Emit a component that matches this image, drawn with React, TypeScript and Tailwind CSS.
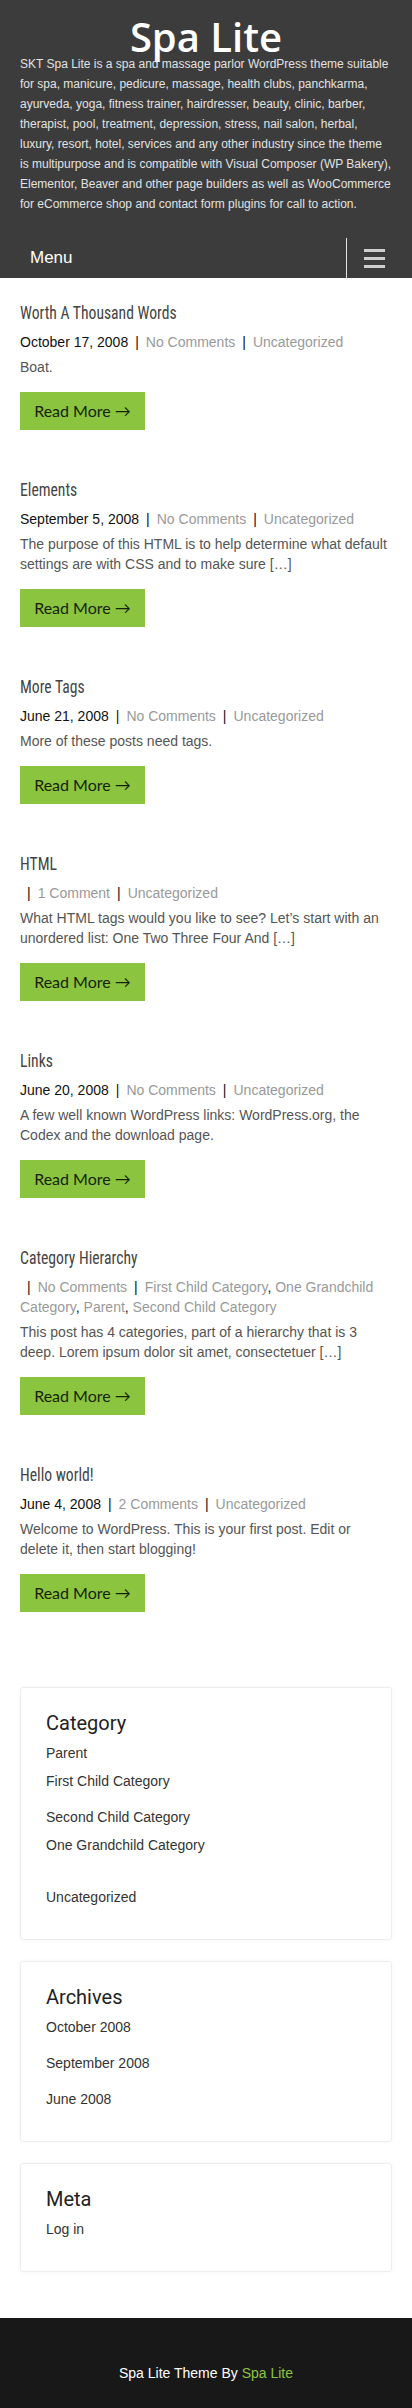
import type { ReactNode } from 'react';

type Post = {
  title: string;
  date?: string;
  comments: string;
  cats: string[];
  excerpt: string;
};

const posts: Post[] = [
  { title: 'Worth A Thousand Words', date: 'October 17, 2008', comments: 'No Comments', cats: ['Uncategorized'], excerpt: 'Boat.' },
  {
    title: 'Elements',
    date: 'September 5, 2008',
    comments: 'No Comments',
    cats: ['Uncategorized'],
    excerpt: 'The purpose of this HTML is to help determine what default settings are with CSS and to make sure […]',
  },
  { title: 'More Tags', date: 'June 21, 2008', comments: 'No Comments', cats: ['Uncategorized'], excerpt: 'More of these posts need tags.' },
  {
    title: 'HTML',
    comments: '1 Comment',
    cats: ['Uncategorized'],
    excerpt: 'What HTML tags would you like to see? Let’s start with an unordered list: One Two Three Four And […]',
  },
  {
    title: 'Links',
    date: 'June 20, 2008',
    comments: 'No Comments',
    cats: ['Uncategorized'],
    excerpt: 'A few well known WordPress links: WordPress.org, the Codex and the download page.',
  },
  {
    title: 'Category Hierarchy',
    comments: 'No Comments',
    cats: ['First Child Category', 'One Grandchild Category', 'Parent', 'Second Child Category'],
    excerpt: 'This post has 4 categories, part of a hierarchy that is 3 deep. Lorem ipsum dolor sit amet, consectetuer […]',
  },
  {
    title: 'Hello world!',
    date: 'June 4, 2008',
    comments: '2 Comments',
    cats: ['Uncategorized'],
    excerpt: 'Welcome to WordPress. This is your first post. Edit or delete it, then start blogging!',
  },
];

const arial = "font-['Liberation_Sans',Arial,sans-serif]";

function PostItem({ post }: { post: Post }) {
  return (
    <article className="mb-[47px]">
      <h2 className="h-[24px] text-[18px] leading-[24px] text-[#444]">
        {/* no condensed face installed, so squeeze Roboto to the narrow width */}
        <span className="inline-block origin-left scale-x-[0.87] whitespace-nowrap font-['Roboto_Condensed',Roboto,sans-serif]">
          {post.title}
        </span>
      </h2>
      <div className={`${arial} mt-[8px] text-[14px] leading-[20px] text-[#111]`}>
        {post.date}
        <span className="mx-[7px]">|</span>
        <a className="text-[#999]">{post.comments}</a>
        <span className="mx-[7px]">|</span>
        {post.cats.map((c, i) => (
          <span key={c}>
            <a className="text-[#999]">{c}</a>
            {i < post.cats.length - 1 ? ', ' : ''}
          </span>
        ))}
      </div>
      <p className={`${arial} mt-[5px] text-[14px] leading-[20px] text-[#555]`}>{post.excerpt}</p>
      <a className="mt-[15px] flex h-[38px] w-[125px] items-center justify-center bg-[#8bc53f] font-['Lato',sans-serif] text-[16px] text-[#17220c]">
        Read More →
      </a>
    </article>
  );
}

function Widget({ title, children }: { title: string; children: ReactNode }) {
  return (
    <section className="rounded-[3px] border border-[#eee] px-[25px] pt-[21px] pb-[32px] shadow-[0_0_4px_rgba(0,0,0,0.04)]">
      <h3 className="font-['Roboto',sans-serif] text-[20px] leading-[28px] text-[#222]">{title}</h3>
      <ul className={`${arial} mt-[6px] text-[14px] leading-[20px] text-[#333]`}>{children}</ul>
    </section>
  );
}

export default function App() {
  return (
    <div className="w-[412px] bg-white">
      <header className="bg-[#3c3c3c]">
        <h1 className="pt-[19px] text-center font-['Open_Sans',sans-serif] text-[40px] font-semibold leading-[36px] text-white">
          Spa Lite
        </h1>
        <p className={`${arial} -mt-px px-[20px] text-[12px] leading-[20px] text-[#e2e2e2]`}>
          SKT Spa Lite is a spa and massage parlor WordPress theme suitable for spa, manicure, pedicure, massage, health
          clubs, panchkarma, ayurveda, yoga, fitness trainer, hairdresser, beauty, clinic, barber, therapist, pool,
          treatment, depression, stress, nail salon, herbal, luxury, resort, hotel, services and any other industry since
          the theme is multipurpose and is compatible with Visual Composer (WP Bakery), Elementor, Beaver and other page
          builders as well as WooCommerce for eCommerce shop and contact form plugins for call to action.
        </p>
        <nav className="mt-[24px] flex h-[40px] items-center">
          <span className={`${arial} flex-1 pl-[30px] text-[17px] text-white`}>Menu</span>
          <div className="h-full w-px bg-[#e5e5e5]" />
          <button className="flex h-full w-[65px] flex-col items-center justify-center gap-[5px] pr-[10px]">
            <span className="block h-[3px] w-[21px] bg-[#cfcfcf]" />
            <span className="block h-[3px] w-[21px] bg-[#cfcfcf]" />
            <span className="block h-[3px] w-[21px] bg-[#cfcfcf]" />
          </button>
        </nav>
      </header>

      <main className="px-[20px] pt-[22px]">
        {posts.map((p) => (
          <PostItem key={p.title} post={p} />
        ))}
        {/* collapses with the last post's bottom margin */}
        <div className="mt-[75px] flex flex-col gap-[21px]">
          <Widget title="Category">
            <li>Parent</li>
            <li className="mt-[8px]">First Child Category</li>
            <li className="mt-[16px]">Second Child Category</li>
            <li className="mt-[8px]">One Grandchild Category</li>
            <li className="mt-[32px]">Uncategorized</li>
          </Widget>
          <Widget title="Archives">
            <li>October 2008</li>
            <li className="mt-[16px]">September 2008</li>
            <li className="mt-[16px]">June 2008</li>
          </Widget>
          <Widget title="Meta">
            <li>Log in</li>
          </Widget>
        </div>
      </main>

      <footer className={`${arial} mt-[46px] bg-[#181818] pt-[45px] pb-[25px] text-center text-[14px] leading-[20px] text-white`}>
        Spa Lite Theme By <a className="text-[#8bc53f]">Spa Lite</a>
      </footer>
    </div>
  );
}
